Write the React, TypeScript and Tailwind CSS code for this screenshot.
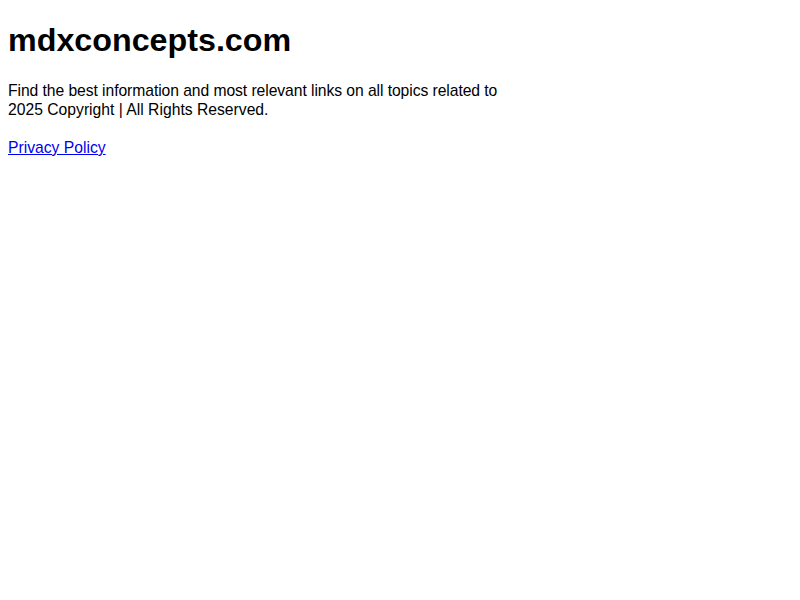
export default function App() {
  return (
    <div className="p-2 font-['Liberation_Sans',Arial,sans-serif] text-black bg-white min-h-[600px]">
      <h1 className="text-[32.25px] leading-[37px] font-bold mt-[14px] mb-[22px]">mdxconcepts.com</h1>
      <p className="text-[15.7px] leading-[19px]">
        <span className="tracking-[-0.07px]">Find the best information and most relevant links on all topics related to</span>
        <br />
        2025 Copyright | All Rights Reserved.
      </p>
      <p className="text-[15.7px] leading-[19px] mt-[19px]">
        <a href="#" className="text-[#0000ee] underline">Privacy Policy</a>
      </p>
    </div>
  )
}
